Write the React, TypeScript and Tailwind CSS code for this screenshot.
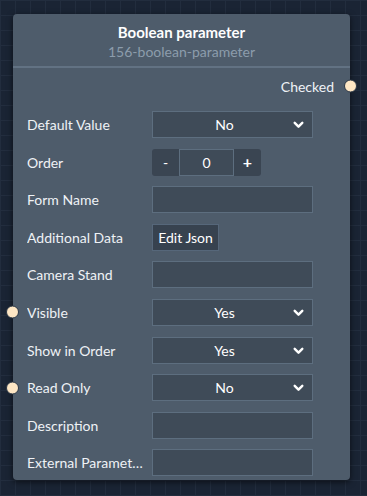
import React from "react";

const Handle: React.FC<{ side: "left" | "right" }> = ({ side }) => (
	<span
		className={`absolute top-1/2 -translate-y-1/2 w-[13px] h-[13px] rounded-full bg-[#fde6c4] border border-[#2b3746] ${
			side === "left" ? "left-[-7px]" : "right-[-7px]"
		}`}
	/>
);

const Chevron: React.FC = () => (
	<svg width="13" height="13" viewBox="0 0 24 24" fill="none" stroke="#ffffff" strokeWidth="4.5" strokeLinecap="round" strokeLinejoin="round">
		<path d="M5 9l7 7 7-7" />
	</svg>
);

const Select: React.FC<{ value: string }> = ({ value }) => (
	<div className="relative w-[161px] h-[27px] bg-[#3f4b58] border border-[#5d6e7f] flex items-center">
		<span className="flex-1 text-center pr-[16px] text-white">{value}</span>
		<span className="absolute right-[7px] top-[6px]">
			<Chevron />
		</span>
	</div>
);

const TextInput: React.FC = () => <div className="w-[161px] h-[27px] bg-[#3f4b58] border border-[#5d6e7f]" />;

const Order: React.FC = () => (
	<div className="flex h-[27px]">
		<div className="w-[27px] bg-[#3a4552] rounded-l-[3px] flex items-center justify-center text-white">-</div>
		<div className="w-[55px] bg-[#3f4b58] border border-[#5d6e7f] flex items-center justify-center text-white">0</div>
		<div className="w-[27px] bg-[#3a4552] rounded-r-[3px] flex items-center justify-center text-white font-bold text-[16px]">+</div>
	</div>
);

type Row = { label: string; field: React.ReactNode; handle?: boolean };

const rows: Row[] = [
	{ label: "Default Value", field: <Select value="No" /> },
	{ label: "Order", field: <Order /> },
	{ label: "Form Name", field: <TextInput /> },
	{
		label: "Additional Data",
		field: (
			<div className="h-[27px] w-[67px] bg-[#37424f] border border-[#56677a] flex items-center justify-center text-white">
				Edit Json
			</div>
		),
	},
	{ label: "Camera Stand", field: <TextInput /> },
	{ label: "Visible", field: <Select value="Yes" />, handle: true },
	{ label: "Show in Order", field: <Select value="Yes" /> },
	{ label: "Read Only", field: <Select value="No" />, handle: true },
	{ label: "Description", field: <TextInput /> },
	{ label: "External Parameters", field: <TextInput /> },
];

const App: React.FC = () => {
	return (
		<div
			className="w-[367px] h-[496px] overflow-hidden bg-[#1a2434] pt-[14px] pl-[13px]"
			style={{
				backgroundImage:
					"linear-gradient(#222d3e 1px, transparent 1px), linear-gradient(90deg, #222d3e 1px, transparent 1px), linear-gradient(#27334596 1px, transparent 1px), linear-gradient(90deg, #27334596 1px, transparent 1px)",
				backgroundSize: "15px 15px, 15px 15px, 75px 75px, 75px 75px",
				fontFamily: "Lato, 'Noto Sans', sans-serif",
			}}
		>
			<div className="relative w-[337px] h-[466px] bg-[#4e5c6b] rounded-[4px] shadow-[0_2px_6px_rgba(0,0,0,0.6)] text-[14px] text-[#eef2f6]">
				<div className="pt-[9px] pb-[5px] text-center border-b-2 border-[#627283]">
					<div className="font-bold text-white text-[15px] leading-[18px]">Boolean parameter</div>
					<div className="mt-[2px] text-[#8c9cac] leading-[18px]">156-boolean-parameter</div>
				</div>
				<div className="relative mt-[8px] h-[20px] flex items-center justify-end pr-[16px]">
					<span>Checked</span>
					<Handle side="right" />
				</div>
				<div className="mt-[15px] flex flex-col gap-[10.6px]">
					{rows.map(row => (
						<div className="relative flex items-center h-[27px] pl-[14px]" key={row.label}>
							{row.handle && <Handle side="left" />}
							<div className="w-[125px] pr-[4px] truncate">{row.label}</div>
							{row.field}
						</div>
					))}
				</div>
			</div>
		</div>
	);
};

export default App;
